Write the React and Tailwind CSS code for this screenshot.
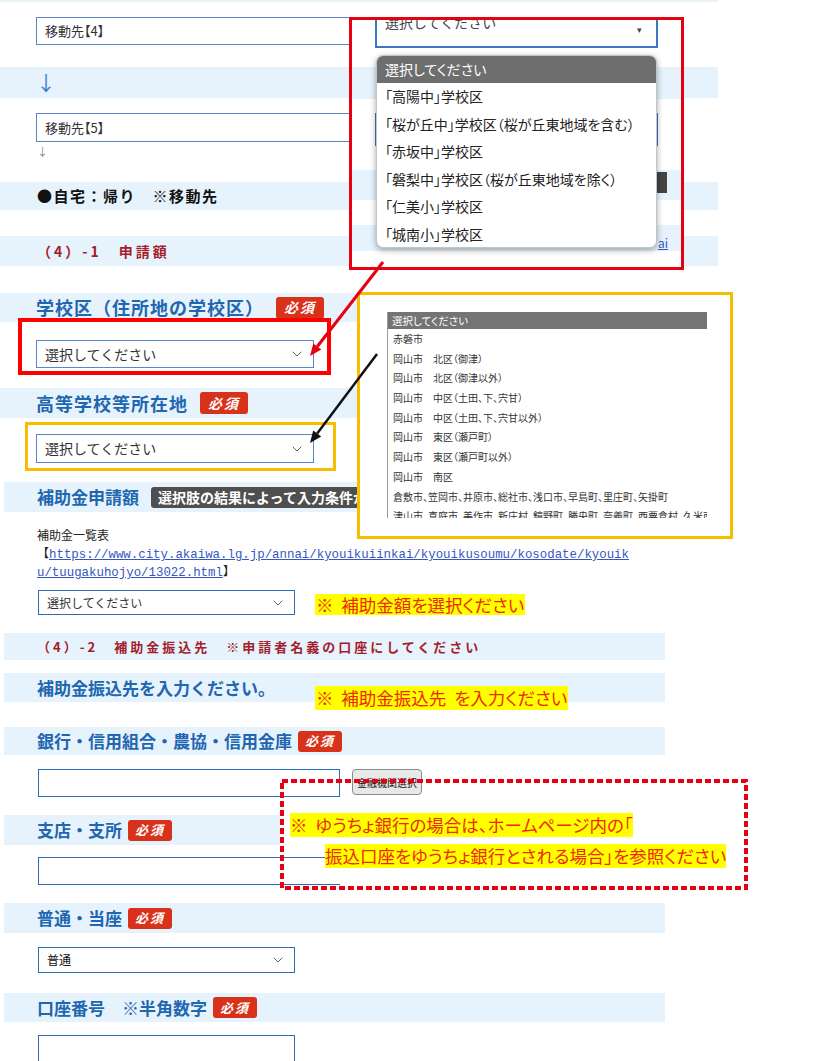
import React from 'react';
import { ChevronDown } from 'lucide-react';

const schoolAreas = [
  '「高陽中」学校区',
  '「桜が丘中」学校区（桜が丘東地域を含む）',
  '「赤坂中」学校区',
  '「磐梨中」学校区（桜が丘東地域を除く）',
  '「仁美小」学校区',
  '「城南小」学校区',
];

const places = [
  '赤磐市',
  '岡山市　北区（御津）',
  '岡山市　北区（御津以外）',
  '岡山市　中区（土田、下、宍甘）',
  '岡山市　中区（土田、下、宍甘以外）',
  '岡山市　東区（瀬戸町）',
  '岡山市　東区（瀬戸町以外）',
  '岡山市　南区',
  '倉敷市、笠岡市、井原市、総社市、浅口市、早島町、里庄町、矢掛町',
  '津山市、真庭市、美作市、新庄村、鏡野町、勝央町、奈義町、西粟倉村、久米南町',
];

const Required = ({ big }) =>
  big ? (
    <span className="ml-[12px] inline-flex h-[22px] w-[48px] items-center justify-center rounded-[3px] bg-[#d9321b] text-[14px] font-bold italic tracking-[2px] text-white">
      必須
    </span>
  ) : (
    <span className="ml-[6px] inline-flex h-[21px] w-[44px] items-center justify-center rounded-[3px] bg-[#d9321b] text-[13px] font-bold italic tracking-[2px] text-white">
      必須
    </span>
  );

const Select = ({ text, className }) => (
  <div className={`flex items-center justify-between bg-white pl-[8px] pr-[8px] ${className}`}>
    <span>{text}</span>
    <ChevronDown size={16} strokeWidth={1.4} className="text-[#555]" />
  </div>
);

const Band = ({ className, children }) => (
  <div className={`flex items-center bg-[#e7f3fc] ${className}`}>{children}</div>
);

export default function App() {
  return (
    <div className="relative h-[1061px] w-[819px] overflow-hidden bg-white font-['Noto_Sans_CJK_JP','Noto_Sans',sans-serif] text-[#333]">
      {/* upper part of the form */}
      <div className="w-[718px] border-t-2 border-[#e9f3fa]">
        <Select text="移動先【4】" className="ml-[36px] mt-[15px] h-[28px] w-[620px] border border-[#5a88c6] text-[13px] [font-feature-settings:'palt']" />
        <Band className="mt-[22px] h-[31px] pl-[36px] text-[20px] text-[#3d7cc9]">↓</Band>
        <Select text="移動先【5】" className="ml-[36px] mt-[15px] h-[29px] w-[620px] border border-[#5a88c6] text-[13px] [font-feature-settings:'palt']" />
        <div className="ml-[37px] h-[18px] text-[11px] leading-[18px] text-[#888]">↓</div>
        <Band className="mt-[22px] h-[28px] pl-[37px] text-[15px] font-bold tracking-[1.5px] text-[#111]">●自宅：帰り　※移動先</Band>
        <Band className="mt-[26px] h-[30px] pl-[37px] text-[14px] font-bold tracking-[3px] text-[#a3202a]">（4）-1　申請額</Band>
        <Band className="mt-[27px] h-[29px] pl-[36px] text-[18px] font-bold tracking-[1px] text-[#2066b0]">
          学校区（住所地の学校区）<Required big />
        </Band>
        <Select text="選択してください" className="ml-[36px] mt-[18px] h-[28px] w-[278px] border border-[#5a88c6] text-[14px]" />
        <Band className="mt-[20px] h-[30px] pl-[36px] text-[18px] font-bold tracking-[1px] text-[#2066b0]">
          高等学校等所在地<Required big />
        </Band>
        <Select text="選択してください" className="ml-[36px] mt-[16px] h-[29px] w-[278px] border border-[#5a88c6] text-[14px]" />
      </div>

      {/* lower part of the form */}
      <div className="ml-[4px] w-[661px]">
        <Band className="mt-[19px] h-[30px] pl-[33px] text-[17px] font-bold text-[#2066b0]">
          補助金申請額
          <span className="ml-[12px] inline-flex h-[21px] items-center whitespace-nowrap rounded-[3px] bg-[#4f4f4f] px-[7px] text-[14px] font-bold text-white">
            選択肢の結果によって入力条件が変わります
          </span>
        </Band>
        <div className="mt-[14px] flex flex-col pl-[33px] text-[12px] text-[#222]">
          <div className="h-[18px] leading-[18px]">補助金一覧表</div>
          <div className="h-[18px] whitespace-nowrap leading-[18px]">
            【<span className="font-['Liberation_Mono',monospace] text-[12.4px] leading-[18px] text-[#3557c0] underline">https://www.city.akaiwa.lg.jp/annai/kyouikuiinkai/kyouikusoumu/kosodate/kyouik</span>
          </div>
          <div className="h-[18px] whitespace-nowrap leading-[18px]">
            <span className="font-['Liberation_Mono',monospace] text-[12.4px] leading-[18px] text-[#3557c0] underline">u/tuugakuhojyo/13022.html</span>】
          </div>
        </div>
        <div className="mt-[10px] flex items-end gap-[20px] pl-[34px]">
          <Select text="選択してください" className="h-[25px] w-[257px] border border-[#2d6db3] text-[12px]" />
          <span className="bg-[#ffff00] px-[1px] text-[17.5px] leading-[21px] text-[#f0280a] [font-feature-settings:'palt']">※&nbsp;&nbsp;補助金額を選択ください</span>
        </div>
        <Band className="mt-[18px] h-[27px] pl-[33px] text-[13px] font-bold tracking-[3px] text-[#a3202a]">（4）-2　補助金振込先　※申請者名義の口座にしてください</Band>
        <Band className="mt-[13px] h-[29px] pl-[33px] text-[17px] font-bold text-[#2066b0]">補助金振込先を入力ください。</Band>
        <Band className="mt-[25px] h-[28px] pl-[33px] text-[17px] font-bold text-[#2066b0]">
          銀行・信用組合・農協・信用金庫<Required />
        </Band>
        <div className="mt-[14px] flex items-start gap-[12px] pl-[34px]">
          <div className="h-[28px] w-[302px] border border-[#2d6db3]" />
          <button className="h-[26px] w-[70px] rounded-[4px] border border-[#8a8a8a] bg-[#e8e8e8] text-[10px] text-[#111]">
            金融機関選択
          </button>
        </div>
        <Band className="mt-[18px] h-[30px] w-[276px] pl-[33px] text-[17px] font-bold text-[#2066b0]">
          支店・支所<Required />
        </Band>
        <div className="ml-[34px] mt-[12px] h-[28px] w-[302px] border border-r-0 border-[#2d6db3]" />
        <Band className="mt-[18px] h-[30px] pl-[33px] text-[17px] font-bold text-[#2066b0]">
          普通・当座<Required />
        </Band>
        <Select text="普通" className="ml-[34px] mt-[14px] h-[26px] w-[257px] border border-[#2d6db3] text-[12px] text-[#111]" />
        <Band className="mt-[20px] h-[29px] pl-[33px] text-[17px] font-bold text-[#2066b0]">
          口座番号　※半角数字<Required />
        </Band>
        <div className="ml-[34px] mt-[13px] h-[30px] w-[257px] border border-[#2d6db3]" />
      </div>

      {/* annotation: frames around the two selects */}
      <div className="absolute left-[18px] top-[318px] h-[57px] w-[313px] border-4 border-[#ff0000]" />
      <div className="absolute left-[25px] top-[422px] h-[49px] w-[311px] border-[3px] border-[#f7bd00]" />

      {/* annotation: opened school-area list */}
      <div className="absolute left-[349px] top-[17px] h-[253px] w-[335px] overflow-hidden border-[3px] border-[#e60012] bg-white">
        <div className="absolute left-0 top-[47px] h-[32px] w-full bg-[#e7f3fc]" />
        <div className="absolute left-[23px] top-[93px] h-[33px] w-[283px] border border-[#3a78c6]" />
        <div className="absolute left-0 top-[150px] h-[30px] w-full bg-[#e7f3fc]" />
        <div className="absolute left-[305px] top-[152px] h-[21px] w-[10px] bg-[#444]" />
        <div className="absolute left-0 top-[205px] h-[26px] w-full bg-[#e7f3fc]" />
        <div className="absolute left-[306px] top-[216px] text-[12px] leading-[14px] text-[#3557c0] underline">ai</div>
        <div className="absolute left-[23px] top-[-14px] flex h-[42px] w-[283px] justify-between border-2 border-[#3a78c6] bg-white pl-[8px] pr-[14px] pt-[4px] text-[14px] leading-[20px] text-[#444]">
          <span>選択してください</span>
          <span className="pt-[12px] text-[9px] leading-[12px]">▾</span>
        </div>
        <div className="absolute left-[24px] top-[35px] h-[193px] w-[281px] overflow-hidden rounded-[7px] border border-[#c4c4c4] bg-white text-[14px] text-[#222] shadow-[0_2px_6px_rgba(0,0,0,0.35)] [font-feature-settings:'palt']">
          <div className="h-[27px] bg-[#6e6e6e] pl-[8px] leading-[27px] text-white">選択してください</div>
          {schoolAreas.map((t) => (
            <div key={t} className="h-[27.5px] whitespace-nowrap pl-[8px] leading-[27.5px]">
              {t}
            </div>
          ))}
        </div>
      </div>

      {/* annotation: opened place list */}
      <div className="absolute left-[357px] top-[292px] h-[247px] w-[376px] overflow-hidden border-[3px] border-[#f7bd00] bg-white">
        <div className="absolute left-[27px] top-[17px] h-[206px] w-[320px] overflow-hidden border-l border-[#9a9a9a] text-[10px] text-[#333] [font-feature-settings:'palt']">
          <div className="h-[17px] bg-[#747474] pl-[4px] text-[10.5px] leading-[17px] text-white">選択してください</div>
          {places.map((t) => (
            <div key={t} className="h-[19.7px] whitespace-nowrap pl-[5px] leading-[19.7px]">
              {t}
            </div>
          ))}
        </div>
      </div>

      {/* annotation: arrows and dashed frame */}
      <svg className="pointer-events-none absolute left-0 top-0" width="819" height="1061">
        <line x1="383" y1="262" x2="317.3" y2="346.5" stroke="#e60012" strokeWidth="3" />
        <polygon points="310,356 321.3,349.5 313.3,343.5" fill="#e60012" />
        <line x1="377" y1="354" x2="317.2" y2="433.4" stroke="#111" strokeWidth="2.5" />
        <polygon points="310,443 321.2,436.4 313.2,430.4" fill="#111" />
        <rect x="282" y="781" width="464" height="107" fill="none" stroke="#e60012" strokeWidth="4" strokeDasharray="6 3" />
      </svg>

      {/* annotation: notes */}
      <div className="absolute left-[315px] top-[686px] bg-[#ffff00] px-[1px] text-[17.5px] leading-[24px] text-[#f0280a] [font-feature-settings:'palt']">
        ※&nbsp;&nbsp;補助金振込先&nbsp;&nbsp;を入力ください
      </div>
      <div className="absolute left-[290px] top-[813px] flex flex-col items-start gap-[7px] text-[17.5px] leading-[24px] text-[#f0280a] [font-feature-settings:'palt']">
        <span className="bg-[#ffff00]">※&nbsp;&nbsp;ゆうちょ銀行の場合は、ホームページ内の「</span>
        <span className="ml-[35px] bg-[#ffff00]">振込口座をゆうちょ銀行とされる場合」を参照ください</span>
      </div>
    </div>
  );
}
